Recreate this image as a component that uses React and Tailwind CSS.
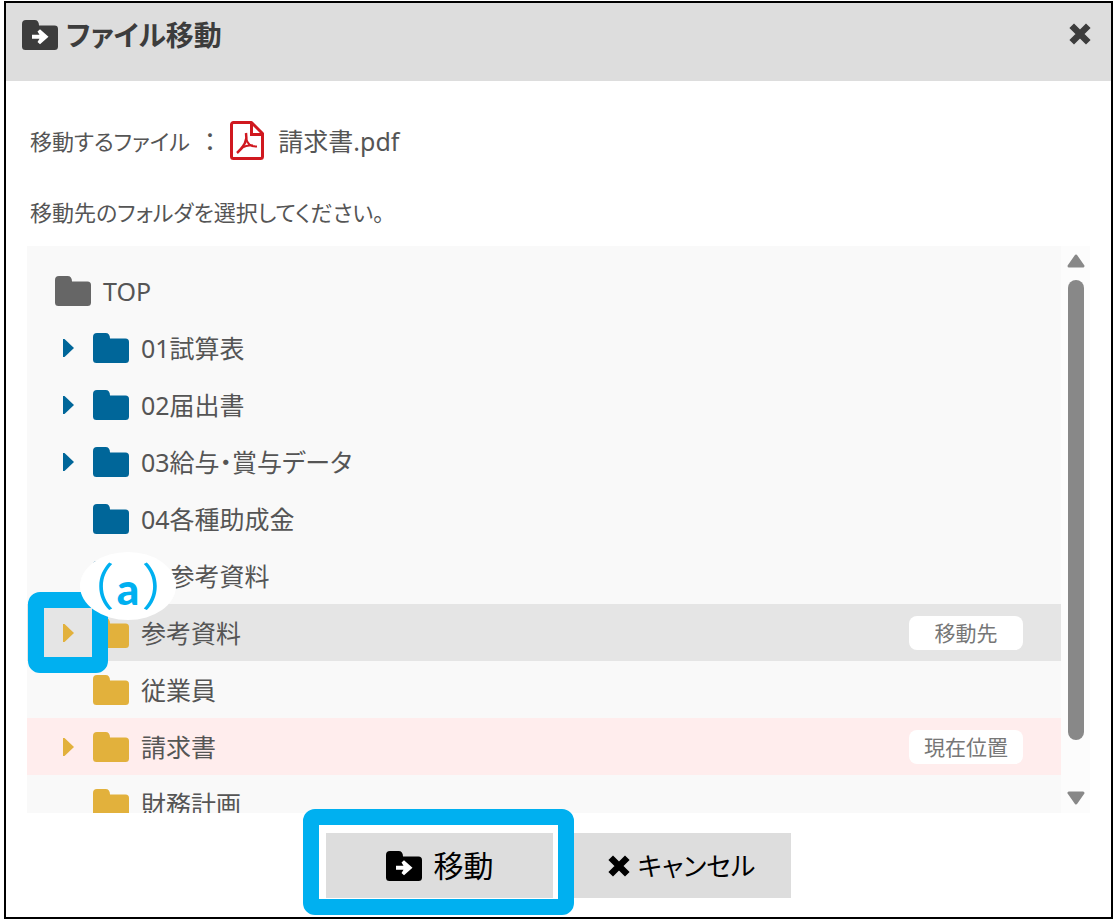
import { useState } from 'react';

const folders = [
  { name: '01試算表', color: 'text-[#006699]', expandable: true },
  { name: '02届出書', color: 'text-[#006699]', expandable: true },
  { name: '03給与・賞与データ', color: 'text-[#006699]', expandable: true },
  { name: '04各種助成金', color: 'text-[#006699]' },
  { name: '05参考資料', color: 'text-[#006699]' },
  { name: '参考資料', color: 'text-[#e2b13c]', expandable: true, marker: 'a' },
  { name: '従業員', color: 'text-[#e2b13c]' },
  { name: '請求書', color: 'text-[#e2b13c]', expandable: true, current: true },
  { name: '財務計画', color: 'text-[#e2b13c]' },
];

const folderPath =
  'M4 0h8.500c3 0 4.500 2 4.500 5.500H32.500a3.500 3.500 0 0 1 3.500 3.500V26.500a3.500 3.500 0 0 1-3.500 3.500H3.500a3.500 3.500 0 0 1-3.500-3.500V4a4 4 0 0 1 4-4z';

const FolderIcon = ({ className = '' }) => (
  <svg viewBox="0 0 36 30" className={`h-[30px] w-9 shrink-0 ${className}`} fill="currentColor" aria-hidden="true">
    <path d={folderPath} />
  </svg>
);

const FolderMoveIcon = () => (
  <svg viewBox="0 0 36 30" className="h-[30px] w-9 shrink-0" fill="currentColor" aria-hidden="true">
    <path d={folderPath} />
    <path className="text-white" d="M10 14.800h7.500l-2-3.200 2.500-2.300 8.500 7.500-8.500 7.500-2.500-2.300 2-3.200H10z" />
  </svg>
);

const CloseIcon = () => (
  <svg viewBox="0 0 22 22" className="size-[22px] shrink-0" fill="none" stroke="currentColor" aria-hidden="true">
    <path d="M5 5l12 12M17 5L5 17" strokeWidth="6.500" strokeLinecap="square" strokeLinejoin="round" />
  </svg>
);

const PdfIcon = () => (
  <svg viewBox="0 0 34 39" className="h-[39px] w-[34px] shrink-0 text-[#d0181f]" fill="none" stroke="currentColor" aria-hidden="true">
    <path d="M3.500 1.500h18l11 11v23a2 2 0 0 1-2 2h-27a2 2 0 0 1-2-2v-32a2 2 0 0 1 2-2z" strokeWidth="3" strokeLinejoin="round" />
    <path d="M21.500 2v11.500H32" strokeWidth="3" />
    <path d="M16 12c1.500 6-1 13-9 20" strokeWidth="2.500" />
    <path d="M16 17c1 5 4 9 11 8.500M11 27c4-2 8-3 12-2.500" strokeWidth="2" />
  </svg>
);

const Triangle = ({ className = '' }) => (
  <svg viewBox="0 0 18 14" className={`h-[14px] w-[18px] ${className}`} fill="currentColor" stroke="currentColor" aria-hidden="true">
    <path d="M9 2l7 10H2z" strokeWidth="3" strokeLinejoin="round" />
  </svg>
);

const Highlight = ({ className = '', children }) => (
  <div className={`pointer-events-none absolute z-10 rounded-xl border-16 border-[#00b0f0] ${className}`}>
    {children}
  </div>
);

const Tag = ({ children }) => (
  <span className="flex h-[34px] w-[114px] items-center justify-center rounded-lg bg-white text-[21px] text-[#777]">
    {children}
  </span>
);

const FolderRow = ({ folder, selected, onSelect }) => (
  <li
    onClick={onSelect}
    className={`flex h-[57px] items-center pr-[38px] pl-[30px] ${
      selected ? 'bg-[#e5e5e5]' : folder.current ? 'bg-[#ffeded]' : ''
    }`}
  >
    <div className="relative flex w-9 shrink-0 items-center">
      {folder.expandable && (
        <button type="button" aria-label={`${folder.name}を開く`} className={`px-1.5 py-1 ${folder.color}`}>
          <svg viewBox="0 0 11 18" className="h-[18px] w-[11px]" fill="currentColor" aria-hidden="true">
            <path d="M0 0h1.500L11 9l-9.500 9H0z" />
          </svg>
        </button>
      )}
      {folder.marker && (
        <Highlight className="-top-7 -left-[29px] h-[81px] w-20">
          <div className="absolute -top-14 left-9 flex h-[68px] w-24 items-center justify-center rounded-[50%] bg-white text-[50px] leading-none text-[#00b0f0]">
            <span className="whitespace-nowrap">
              （<span className="mx-1 font-[Lato] text-[44px] font-black">{folder.marker}</span>）
            </span>
          </div>
        </Highlight>
      )}
    </div>
    <div className="flex grow items-center gap-3">
      <FolderIcon className={folder.color} />
      <span>{folder.name}</span>
    </div>
    {selected && <Tag>移動先</Tag>}
    {folder.current && <Tag>現在位置</Tag>}
  </li>
);

const App = () => {
  const [selected, setSelected] = useState('参考資料');

  return (
    <div className="min-h-screen bg-white pt-px pr-px pb-px pl-1 font-['Noto_Sans','Noto_Sans_CJK_JP',sans-serif] text-[25px] leading-8 text-[#555] [font-feature-settings:'palt']">
      <div role="dialog" aria-labelledby="dialog-title" className="border-2 border-black pb-[19px]">
        <header className="flex h-[78px] items-start justify-between bg-[#ddd] px-4 pt-4 text-[#3c3c3c]">
          <h1 id="dialog-title" className="flex items-center gap-2 text-[28px] font-bold">
            <FolderMoveIcon />
            ファイル移動
          </h1>
          <button type="button" aria-label="閉じる" className="p-1">
            <CloseIcon />
          </button>
        </header>

        <div className="px-[21px]">
          <p className="mt-10 flex items-center px-[3px]">
            <span className="text-[22px]">移動するファイル</span>
            <span className="mx-[14px]">：</span>
            <PdfIcon />
            <span className="ml-[14px]">請求書.pdf</span>
          </p>
          <p className="mt-9 px-[3px] text-[22px] leading-8">移動先のフォルダを選択してください。</p>

          <div className="mt-[18px] flex h-[567px] bg-[#f9f9f9]">
            <ul className="grow overflow-hidden pt-4">
              <li className="flex h-[57px] items-center gap-3 pl-7">
                <FolderIcon className="text-[#666]" />
                TOP
              </li>
              {folders.map((folder) => (
                <FolderRow
                  key={folder.name}
                  folder={folder}
                  selected={selected === folder.name}
                  onSelect={() => setSelected(folder.name)}
                />
              ))}
            </ul>
            <div className="flex w-[29px] shrink-0 flex-col items-center bg-[#fcfcfc] py-2 text-[#888]">
              <Triangle />
              <div className="mt-3 h-[460px] w-4 rounded-full bg-[#888]" />
              <Triangle className="mt-auto rotate-180" />
            </div>
          </div>

          <div className="mt-5 flex justify-center gap-[11px] text-black">
            <div className="relative">
              <button type="button" className="flex h-[65px] w-[227px] items-center justify-center gap-3 bg-[#ddd] text-[30px]">
                <FolderMoveIcon />
                移動
              </button>
              <Highlight className="-top-6 -left-[23px] h-[106px] w-[271px]" />
            </div>
            <button type="button" className="flex h-[65px] w-[227px] items-center justify-center gap-2 bg-[#ddd] pl-2 text-[26px]">
              <CloseIcon />
              キャンセル
            </button>
          </div>
        </div>
      </div>
    </div>
  );
};

export default App;
